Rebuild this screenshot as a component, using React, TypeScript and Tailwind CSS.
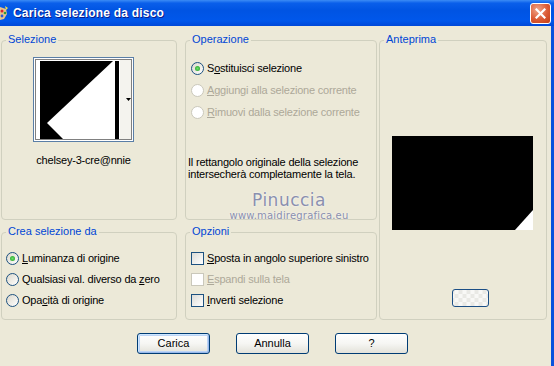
import type { ReactNode } from 'react';

const FONT = "font-['Liberation_Sans',Arial,sans-serif]";

const Radio = ({ checked = false, disabled = false }: { checked?: boolean; disabled?: boolean }) => (
	<span
		className={
			'flex h-[13px] w-[13px] shrink-0 items-center justify-center rounded-full border ' +
			(disabled
				? 'border-[#CAC8BB] bg-white'
				: 'border-[#1C5180] bg-linear-to-br from-[#DCD8CC] to-white')
		}>
		{checked && (
			<span className="h-[5px] w-[5px] rounded-full bg-[radial-gradient(circle,#6BE06B,#1E9A1E)]" />
		)}
	</span>
);

const Check = ({ disabled = false }: { disabled?: boolean }) => (
	<span
		className={
			'h-[13px] w-[13px] shrink-0 border ' +
			(disabled
				? 'border-[#CAC8BB] bg-white'
				: 'border-[#1C5180] bg-linear-to-br from-[#DCDCD7] to-white')
		}
	/>
);

const Group = ({ title, className, children }: { title: string; className?: string; children?: ReactNode }) => (
	<div className={'relative rounded-[4px] border border-[#D0D0BF] ' + (className ?? '')}>
		<span className="absolute -top-[8px] left-[4px] bg-[#ECE9D8] px-[2px] leading-[13px] text-[#0046D5]">
			{title}
		</span>
		{children}
	</div>
);

const Row = ({ control, disabled, children }: { control: ReactNode; disabled?: boolean; children: ReactNode }) => (
	<div className="flex h-[13px] items-center gap-[3px]">
		{control}
		<span
			className={
				'whitespace-nowrap leading-[13px] tracking-[-0.2px] ' + (disabled ? 'text-[#ACA899]' : 'text-black')
			}>
			{children}
		</span>
	</div>
);

const Btn = ({ children, primary }: { children: ReactNode; primary?: boolean }) => (
	<button
		className={
			'h-[21px] w-[73px] rounded-[3px] border border-[#003C74] bg-linear-to-b from-white via-[#F6F6F3] to-[#E3E2DA] leading-[13px] text-black ' +
			(primary ? 'shadow-[inset_1px_1px_0_#CEE7FF,inset_-1px_-1px_0_#98B8EA,inset_0_0_0_2px_#BCD4F6]' : '')
		}>
		{children}
	</button>
);

const Thumb = () => (
	<svg width="101" height="85" viewBox="0 0 101 85" className="block">
		<rect x="0.5" y="0.5" width="100" height="84" fill="#fff" stroke="#5A7EA6" />
		<rect x="2.5" y="2.5" width="96" height="80" fill="none" stroke="#000" strokeDasharray="1 1" />
		<rect x="87" y="3" width="11" height="79" fill="#F4F3EE" />
		<rect x="7" y="4" width="79" height="78" fill="#000" />
		<polygon points="80,4 82,4 82,82 30,82 14,66" fill="#fff" />
		<polygon points="93,41 98,41 95.5,44" fill="#000" />
	</svg>
);

const App = () => {
	return (
		<div className={'relative h-[366px] w-[554px] overflow-hidden bg-[#ECE9D8] text-[11px] ' + FONT}>
			{/* title bar */}
			<div className="flex h-[26px] items-center justify-between bg-[linear-gradient(180deg,#3C8CF5_0%,#0A5FEA_12%,#0054E3_40%,#0057EB_80%,#0048D8_100%)]">
				<div className="flex items-center">
					<svg width="9" height="16" viewBox="0 0 9 16">
						<path d="M0 2 L6 4 L7 9 L4 14 L0 15 Z" fill="#E8C48A" />
						<circle cx="2" cy="6" r="1.5" fill="#D8242C" />
						<circle cx="5" cy="8" r="1.3" fill="#2F9B3A" />
						<circle cx="2" cy="11" r="1.4" fill="#2B56D8" />
						<path d="M5 1 L8 3 L6 5 Z" fill="#F2E14A" />
					</svg>
					<span className="ml-[4px] text-[12px] font-bold tracking-[0.2px] text-white [text-shadow:1px_1px_0_#0A1C8A]">
						Carica selezione da disco
					</span>
				</div>
				<div className="mr-[3px] flex h-[21px] w-[21px] items-center justify-center rounded-[3px] border border-white bg-[radial-gradient(circle_at_35%_30%,#F0A58A,#DB5A34_55%,#C23E16)]">
					<svg width="11" height="11" viewBox="0 0 11 11">
						<path d="M1.5 1.5 L9.5 9.5 M9.5 1.5 L1.5 9.5" stroke="#fff" strokeWidth="2.2" strokeLinecap="square" />
					</svg>
				</div>
			</div>

			{/* body */}
			<div className="h-[340px] border-r-[3px] border-[#0A52DD]">
				<div className="flex gap-[2px] pl-[1px] pt-[14px]">
					<div className="grid grid-cols-[176px_192px] grid-rows-[180px_88px] gap-x-[8px] gap-y-[12px]">
						<Group title="Selezione">
							<div className="ml-[31px] flex w-[101px] flex-col items-center pt-[16px]">
								<Thumb />
								<span className="mt-[12px] whitespace-nowrap leading-[13px] tracking-[-0.2px]">
									chelsey-3-cre@nnie
								</span>
							</div>
						</Group>

						<Group title="Operazione">
							<div className="flex flex-col gap-[9px] pl-[5px] pt-[21px]">
								<Row control={<Radio checked />}>
									S<u>o</u>stituisci selezione
								</Row>
								<Row control={<Radio disabled />} disabled>
									<u>A</u>ggiungi alla selezione corrente
								</Row>
								<Row control={<Radio disabled />} disabled>
									<u>R</u>imuovi dalla selezione corrente
								</Row>
							</div>
							<p className="mt-[37px] pl-[2px] leading-[12px] tracking-[-0.2px]">
								Il rettangolo originale della selezione
								<br />
								intersecherà completamente la tela.
							</p>
						</Group>

						<Group title="Crea selezione da">
							<div className="flex flex-col gap-[8px] pl-[4px] pt-[19px]">
								<Row control={<Radio checked />}>
									<u>L</u>uminanza di origine
								</Row>
								<Row control={<Radio />}>
									Qualsiasi val. diverso da <u>z</u>ero
								</Row>
								<Row control={<Radio />}>
									Opa<u>c</u>ità di origine
								</Row>
							</div>
						</Group>

						<Group title="Opzioni">
							<div className="flex flex-col gap-[8px] pl-[5px] pt-[19px]">
								<Row control={<Check />}>
									<u>S</u>posta in angolo superiore sinistro
								</Row>
								<Row control={<Check disabled />} disabled>
									<u>E</u>spandi sulla tela
								</Row>
								<Row control={<Check />}>
									<u>I</u>nverti selezione
								</Row>
							</div>
						</Group>
					</div>

					<Group title="Anteprima" className="h-[280px] w-[168px]">
						<div className="ml-[12px] mt-[95px] h-[94px] w-[141px] bg-black">
							<svg width="141" height="94" viewBox="0 0 141 94" className="block">
								<polygon points="141,74 141,94 123,94" fill="#fff" />
							</svg>
						</div>
						<div className="ml-[72px] mt-[59px] h-[18px] w-[37px] rounded-[3px] border border-[#1C4F85] bg-[#F3F3EF] bg-[conic-gradient(#E9E9E5_25%,#F8F8F6_0_50%,#E9E9E5_0_75%,#F8F8F6_0)] bg-[length:8px_8px] bg-center" />
					</Group>
				</div>

				<div className="mt-[13px] flex gap-[26px] pl-[137px]">
					<Btn primary>Carica</Btn>
					<Btn>Annulla</Btn>
					<Btn>?</Btn>
				</div>
			</div>

			{/* watermark */}
			<div className="pointer-events-none absolute left-[226px] top-[190px] flex w-[126px] flex-col items-center font-['DejaVu_Sans',sans-serif] text-[#8A8FAE] [text-shadow:0_0_2px_#fff]">
				<span className="text-[17px] leading-[20px] tracking-[0.5px]">Pinuccia</span>
				<span className="text-[10px] leading-[11px] tracking-[0.2px]">www.maidiregrafica.eu</span>
			</div>
		</div>
	);
};

export default App;
